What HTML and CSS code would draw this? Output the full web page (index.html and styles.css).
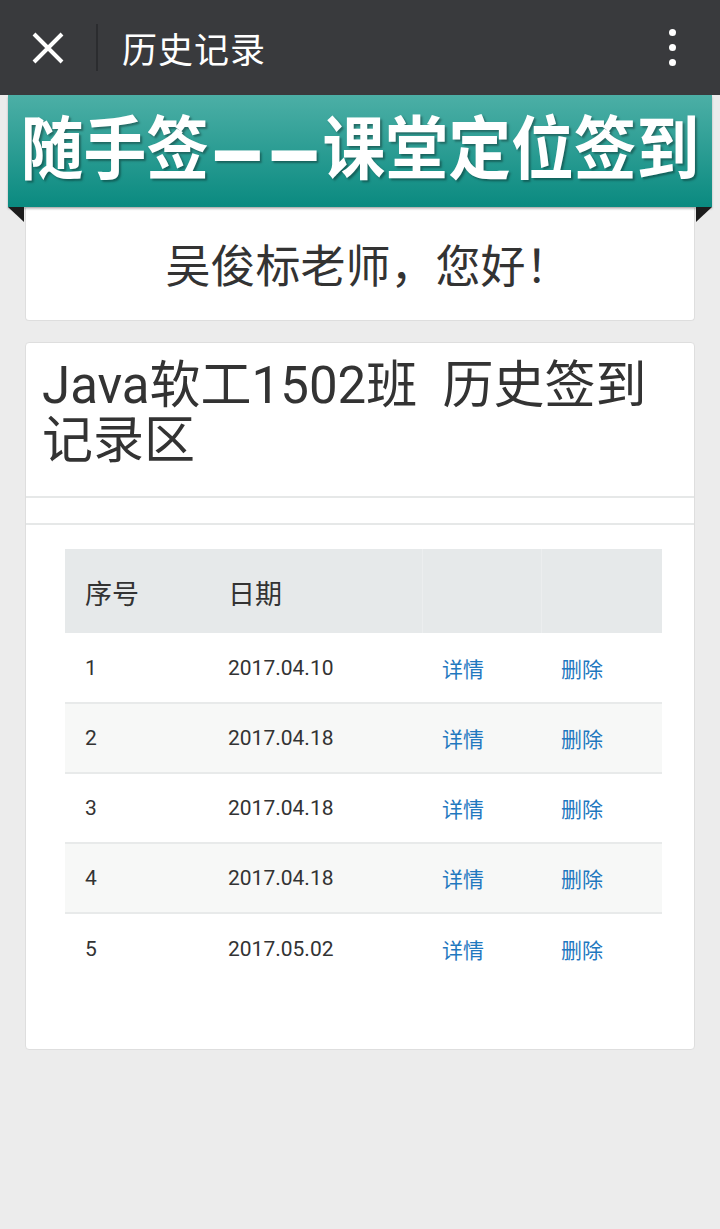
FILE: index.html
```html
<!DOCTYPE html>
<html lang="zh-CN">
<head>
<meta charset="utf-8">
<title>历史记录</title>
<link rel="stylesheet" href="styles.css">
</head>
<body>
<header class="topbar">
  <button class="close-btn" aria-label="关闭">
    <svg width="32" height="32" viewBox="0 0 32 32"><path d="M2 2 L30 30 M30 2 L2 30" stroke="#fff" stroke-width="4" fill="none"/></svg>
  </button>
  <span class="divider"></span>
  <h1 class="topbar-title">历史记录</h1>
  <span class="more" aria-label="更多"><i></i><i></i><i></i></span>
</header>

<div class="banner"><span class="banner-text">随手签<span class="dash">—</span><span class="dash">—</span>课堂定位签到</span></div>

<main class="content">
  <section class="card greet">吴俊标老师，您好！</section>

  <section class="card records">
    <h2 class="records-title">Java软工1502班&nbsp;&nbsp;历史签到记录区</h2>
    <div class="records-strip"></div>
    <div class="records-body">
      <table class="rec-table">
        <thead>
          <tr><th class="c1">序号</th><th class="c2">日期</th><th class="c3"></th><th class="c4"></th></tr>
        </thead>
        <tbody>
          <tr><td>1</td><td>2017.04.10</td><td><a href="#">详情</a></td><td><a href="#">删除</a></td></tr>
          <tr><td>2</td><td>2017.04.18</td><td><a href="#">详情</a></td><td><a href="#">删除</a></td></tr>
          <tr><td>3</td><td>2017.04.18</td><td><a href="#">详情</a></td><td><a href="#">删除</a></td></tr>
          <tr><td>4</td><td>2017.04.18</td><td><a href="#">详情</a></td><td><a href="#">删除</a></td></tr>
          <tr><td>5</td><td>2017.05.02</td><td><a href="#">详情</a></td><td><a href="#">删除</a></td></tr>
        </tbody>
      </table>
    </div>
  </section>
</main>
</body>
</html>
```

FILE: styles.css
```css
* { box-sizing: border-box; }
html, body { margin: 0; padding: 0; }
body {
  background: #ececec;
  font-family: Roboto, "Noto Sans CJK SC", sans-serif;
  color: #333;
  min-height: 1229px;
}

.topbar {
  height: 95px;
  background: #393a3d;
  display: flex;
  align-items: center;
  padding: 0 0 0 32px;
}
.close-btn {
  width: 32px; height: 32px;
  padding: 0; border: 0; background: none;
  display: flex;
}
.divider {
  width: 2px; height: 47px;
  background: #2b2c2f;
  margin-left: 32px;
}
.topbar-title {
  margin: 0 0 0 24px;
  font-size: 35px;
  font-weight: normal;
  color: #fff;
  flex: 1;
  letter-spacing: 1px;
}
.more {
  display: flex; flex-direction: column; gap: 8px;
  width: 96px; align-items: center;
}
.more i {
  width: 7px; height: 7px; border-radius: 50%;
  background: #fff; display: block;
}

.banner {
  position: relative;
  margin: 0 8px;
  height: 112px;
  background: linear-gradient(#4cafa6, #0a8a80);
  box-shadow: 0 2px 2px rgba(0,0,0,0.25);
  display: flex;
  align-items: center;
  justify-content: center;
  z-index: 2;
}
.banner::before, .banner::after {
  content: "";
  position: absolute;
  top: 112px;
  width: 16px; height: 15px;
  background: #1d1d1d;
}
.banner::before { left: 0; clip-path: polygon(0 0, 100% 0, 100% 100%); }
.banner::after { right: 0; clip-path: polygon(0 0, 100% 0, 0 100%); }
.banner-text {
  display: inline-block;
  color: #fff;
  font-family: "Noto Sans CJK SC", sans-serif;
  font-weight: bold;
  font-size: 62px;
  line-height: 1;
  white-space: nowrap;
  text-shadow: 2px 2px 2px rgba(0,0,0,0.35);
  transform: scale(1.013, 1.12);
  margin-top: -8px;
}
.dash {
  display: inline-block;
  font-family: "DejaVu Sans", sans-serif;
  font-weight: bold;
  transform: scale(0.8, 1.2);
  margin: 0 -3px;
}

.content {
  padding: 0 25px;
  display: flex;
  flex-direction: column;
  gap: 21px;
}
.card {
  background: #fff;
  border: 1px solid #dedede;
  border-radius: 4px;
}
.greet {
  margin-top: 1px;
  height: 113px;
  display: flex;
  align-items: center;
  justify-content: center;
  font-size: 45px;
  padding: 0 0 2px 16px;
  border-top: 0;
  border-radius: 0 0 4px 4px;
  font-family: "Noto Sans CJK SC", sans-serif;
}

.records { min-height: 708px; }
.records-title {
  margin: 0;
  padding: 15px 16px 28px 16px;
  font-size: 51px;
  line-height: 55px;
  font-weight: normal;
  border-bottom: 2px solid #e6e8e8;
}
.records-strip {
  height: 27px;
  border-bottom: 2px solid #e6e8e8;
}
.records-body {
  padding: 24px 32px 64px 39px;
}
.rec-table {
  width: 100%;
  border-collapse: collapse;
  font-size: 21px;
}
.rec-table th {
  background: #e6e9ea;
  height: 84px;
  text-align: left;
  font-weight: normal;
  font-size: 27px;
  padding: 2px 20px 0;
}
.rec-table th.c3, .rec-table th.c4 { border-left: 1px solid #eceeef; }
.rec-table .c1 { width: 143px; }
.rec-table .c2 { width: 214px; }
.rec-table .c3 { width: 119px; }
.rec-table td {
  height: 70px;
  padding: 0 20px;
  border-top: 2px solid #e8eaea;
}
.rec-table tbody tr:first-child td { border-top: 0; }
.rec-table tbody tr:nth-child(even) td { background: #f7f8f7; }
.rec-table a {
  color: #1f78bf;
  text-decoration: none;
  font-family: "Noto Sans CJK SC", sans-serif;
}
```
